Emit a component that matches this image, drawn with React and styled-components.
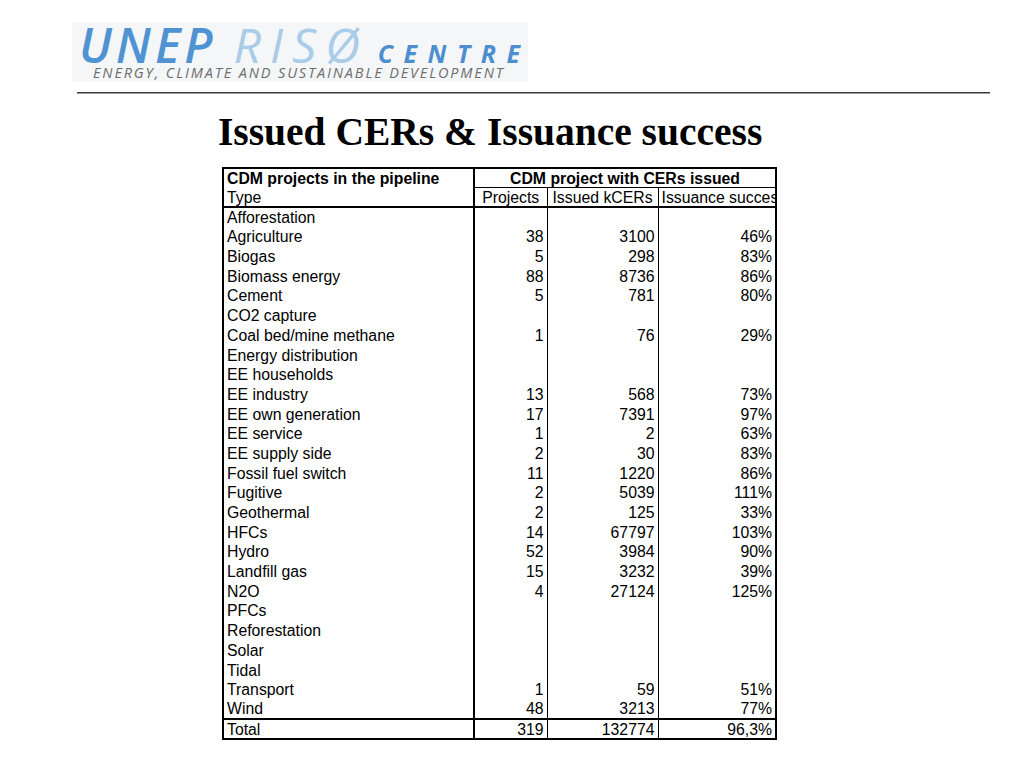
import React from "react";
import styled, { createGlobalStyle } from "styled-components";

const Global = createGlobalStyle`
  html, body { margin: 0; padding: 0; background: #ffffff; }
  body { width: 1024px; height: 768px; overflow: hidden; font-family: "Liberation Sans", Arial, sans-serif; }
`;

const Page = styled.div`
  display: flex;
  flex-direction: column;
  width: 1024px;
  height: 768px;
`;

const Header = styled.div`
  display: flex;
  flex-direction: column;
  padding: 22px 0 0 72px;
`;

const Logo = styled.div`
  width: 456px;
  height: 60px;
  background: #f4f6f8;
  display: flex;
  flex-direction: column;
  box-sizing: border-box;
  padding: 1px 0 0 7px;
  font-family: "Open Sans", "DejaVu Sans", sans-serif;
  font-style: italic;
`;

const LogoTop = styled.div`
  display: flex;
  align-items: baseline;
  height: 44px;
  line-height: 44px;
  white-space: nowrap;
`;

const Unep = styled.span`
  font-size: 48px;
  font-weight: 600;
  color: #4f93d2;
  letter-spacing: 4px;
`;

const Riso = styled.span`
  font-size: 48px;
  font-weight: 500;
  color: #a9cce9;
  letter-spacing: 9px;
  margin-left: 17px;
`;

const Centre = styled.span`
  font-size: 25px;
  font-weight: 700;
  color: #4d8ed0;
  letter-spacing: 10.5px;
  margin-left: 9px;
`;

const Tagline = styled.div`
  font-size: 14.5px;
  color: #6e6e6e;
  letter-spacing: 1.85px;
  margin: -1px 0 0 14px;
  line-height: 14px;
  white-space: nowrap;
`;

const Rule = styled.div`
  margin: 10px 34px 0 77px;
  height: 0;
  border-top: 1px solid #3c3c3c;
  border-bottom: 1px solid #9a9a9a;
`;

const Title = styled.h1`
  margin: 17px 0 0 218px;
  font-family: "Liberation Serif", "Times New Roman", serif;
  font-weight: 700;
  font-size: 39.5px;
  line-height: 42px;
  color: #000;
  white-space: nowrap;
`;

const Table = styled.table`
  margin: 14px 0 0 222px;
  border-collapse: collapse;
  table-layout: fixed;
  width: 553px;
  border: 2px solid #000;
  font-size: 15.8px;
  color: #000;
`;

const Cell = styled.td`
  height: 19.7px;
  padding: 0 3px;
  line-height: 17px;
  box-sizing: border-box;
  white-space: nowrap;
  overflow: hidden;
  text-align: ${(p) => p.$align || "left"};
  font-weight: ${(p) => (p.$bold ? 700 : 400)};
  border-left: ${(p) => p.$left || "none"};
  border-top: ${(p) => p.$top || "none"};
  border-bottom: ${(p) => p.$bottom || "none"};
  vertical-align: middle;
`;

const thick = "2px solid #000";
const thin = "1px solid #000";

const rows = [
  ["Afforestation"],
  ["Agriculture", 38, 3100, "46%"],
  ["Biogas", 5, 298, "83%"],
  ["Biomass energy", 88, 8736, "86%"],
  ["Cement", 5, 781, "80%"],
  ["CO2 capture"],
  ["Coal bed/mine methane", 1, 76, "29%"],
  ["Energy distribution"],
  ["EE households"],
  ["EE industry", 13, 568, "73%"],
  ["EE own generation", 17, 7391, "97%"],
  ["EE service", 1, 2, "63%"],
  ["EE supply side", 2, 30, "83%"],
  ["Fossil fuel switch", 11, 1220, "86%"],
  ["Fugitive", 2, 5039, "111%"],
  ["Geothermal", 2, 125, "33%"],
  ["HFCs", 14, 67797, "103%"],
  ["Hydro", 52, 3984, "90%"],
  ["Landfill gas", 15, 3232, "39%"],
  ["N2O", 4, 27124, "125%"],
  ["PFCs"],
  ["Reforestation"],
  ["Solar"],
  ["Tidal"],
  ["Transport", 1, 59, "51%"],
  ["Wind", 48, 3213, "77%"],
];

export default function App() {
  return (
    <Page>
      <Global />
      <Header>
        <Logo>
          <LogoTop>
            <Unep>UNEP</Unep>
            <Riso>RISØ</Riso>
            <Centre>CENTRE</Centre>
          </LogoTop>
          <Tagline>ENERGY, CLIMATE AND SUSTAINABLE DEVELOPMENT</Tagline>
        </Logo>
      </Header>
      <Rule />
      <Title>Issued CERs &amp; Issuance success</Title>
      <Table>
        <colgroup>
          <col style={{ width: 251 }} />
          <col style={{ width: 73 }} />
          <col style={{ width: 111 }} />
          <col style={{ width: 118 }} />
        </colgroup>
        <tbody>
          <tr>
            <Cell $bold>CDM projects in the pipeline</Cell>
            <Cell $bold colSpan={3} $align="center" $left={thick} $bottom={thin}>
              CDM project with CERs issued
            </Cell>
          </tr>
          <tr>
            <Cell $bottom={thick}>Type</Cell>
            <Cell $align="center" $left={thick} $bottom={thick}>Projects</Cell>
            <Cell $align="center" $left={thin} $bottom={thick}>Issued kCERs</Cell>
            <Cell $left={thin} $bottom={thick}>Issuance success</Cell>
          </tr>
          {rows.map((r) => (
            <tr key={r[0]}>
              <Cell>{r[0]}</Cell>
              <Cell $align="right" $left={thick}>{r[1] ?? ""}</Cell>
              <Cell $align="right" $left={thin}>{r[2] ?? ""}</Cell>
              <Cell $align="right" $left={thin}>{r[3] ?? ""}</Cell>
            </tr>
          ))}
          <tr>
            <Cell $top={thick}>Total</Cell>
            <Cell $align="right" $left={thick} $top={thick}>319</Cell>
            <Cell $align="right" $left={thin} $top={thick}>132774</Cell>
            <Cell $align="right" $left={thin} $top={thick}>96,3%</Cell>
          </tr>
        </tbody>
      </Table>
    </Page>
  );
}
